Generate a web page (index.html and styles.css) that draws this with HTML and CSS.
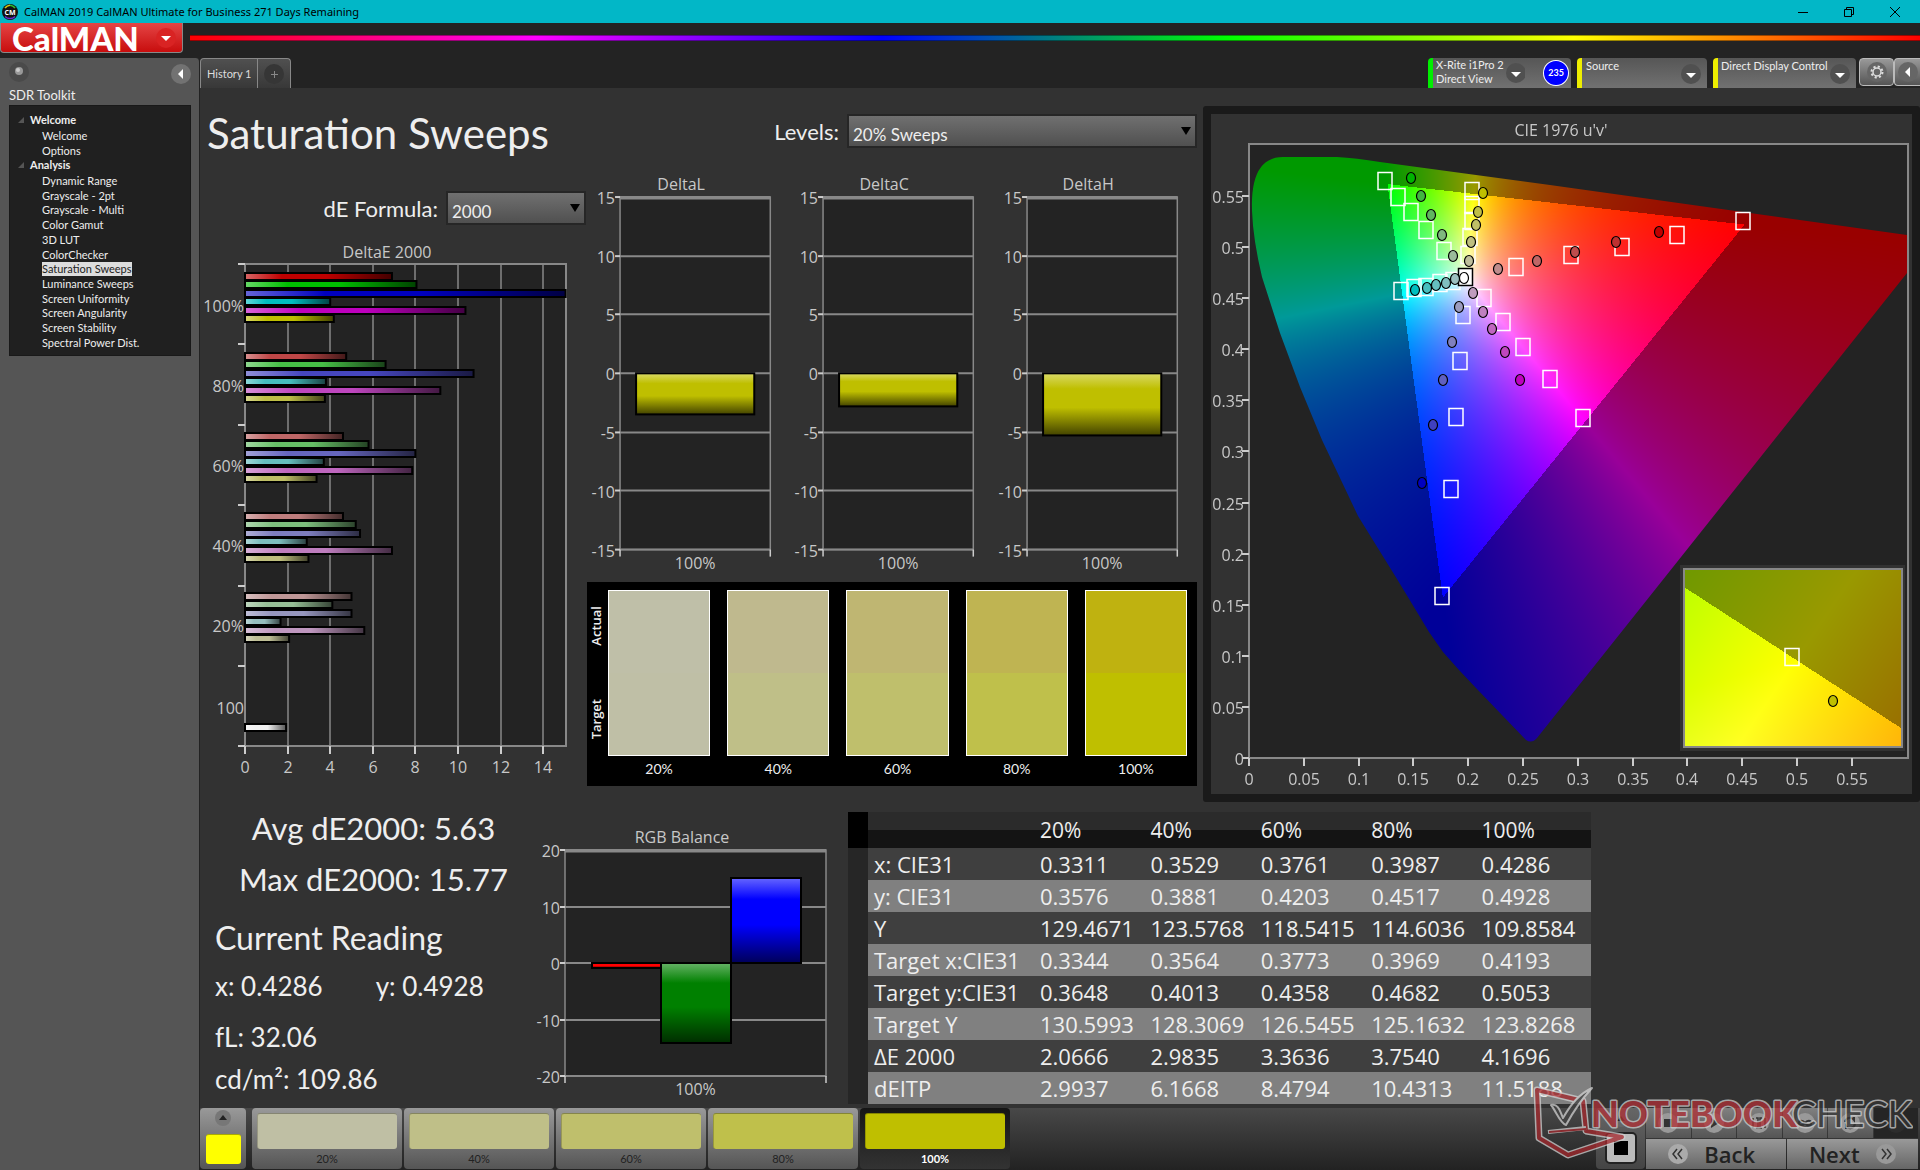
FILE: index.html
```html
<!DOCTYPE html>
<html lang="en">
<head>
    <meta charset="UTF-8">
    <meta name="viewport" content="width=device-width, initial-scale=1.0">
    <title>CalMAN 2019 CalMAN Ultimate for Business</title>
    <link rel="stylesheet" href="styles.css">
</head>
<body>
    <!-- Window title bar -->
    <div class="titlebar">
        <svg class="app-icon" width="16" height="16" viewBox="0 0 16 16">
            <circle cx="8" cy="8" r="8" fill="#111"/>
            <path d="M3 4A6.500 6.500 0 0 1 8 1.200" stroke="#d2c814" stroke-width="1.500" fill="none"/>
            <path d="M8 1.200A6.500 6.500 0 0 1 13 4" stroke="#2fc22f" stroke-width="1.500" fill="none"/>
            <path d="M3 12.500A7 7 0 0 0 13 12.500" stroke="#6b2bd0" stroke-width="1.500" fill="none"/>
            <text x="8" y="11" text-anchor="middle" class="app-icon-text">CM</text>
        </svg>
        <span class="window-title">CalMAN 2019 CalMAN Ultimate for Business 271 Days Remaining</span>
        <div class="window-buttons">
            <button aria-label="Minimize"><svg width="12" height="12"><path d="M1 6.500h10" stroke="#000"/></svg></button>
            <button aria-label="Restore"><svg width="12" height="12" fill="none" stroke="#000"><path d="M1.500 3.500h7v7h-7zM3.500 3.500v-2h7v7h-2"/></svg></button>
            <button aria-label="Close"><svg width="12" height="12"><path d="M1 1l10 10M11 1L1 11" stroke="#000"/></svg></button>
        </div>
    </div>

    <!-- Brand and spectrum line -->
    <div class="brandbar">
        <button class="brand">
            <span>CalMAN</span>
            <svg width="20" height="20"><circle cx="10" cy="10" r="10" fill="#d92323"/><path d="M5 8h10l-5 5z" fill="#fff"/></svg>
        </button>
        <div class="spectrum"></div>
    </div>

    <div class="layout">
        <!-- Sidebar -->
        <aside class="sidebar">
            <div class="sidebar-top">
                <svg width="20" height="20"><circle cx="10" cy="10" r="10" fill="#4a4a4a"/><circle cx="10" cy="9" r="4" fill="#999"/><circle cx="9" cy="8" r="2" fill="#ccc"/></svg>
                <button aria-label="Collapse sidebar"><svg width="20" height="20"><circle cx="10" cy="10" r="10" fill="#727272"/><path d="M12 5v10l-5-5z" fill="#fff"/></svg></button>
            </div>
            <h2>SDR Toolkit</h2>
            <nav class="tree">
                <h3><svg width="6" height="6"><path d="M6 0v6H0z" fill="#555"/></svg>Welcome</h3>
                <ul class="tree-short">
                    <li><a href="#">Welcome</a></li>
                    <li><a href="#">Options</a></li>
                </ul>
                <h3><svg width="6" height="6"><path d="M6 0v6H0z" fill="#555"/></svg>Analysis</h3>
                <ul class="tree-long">
                    <li><a href="#">Dynamic Range</a></li>
                    <li><a href="#">Grayscale - 2pt</a></li>
                    <li><a href="#">Grayscale - Multi</a></li>
                    <li><a href="#">Color Gamut</a></li>
                    <li><a href="#">3D LUT</a></li>
                    <li><a href="#">ColorChecker</a></li>
                    <li><a href="#" class="selected">Saturation Sweeps</a></li>
                    <li><a href="#">Luminance Sweeps</a></li>
                    <li><a href="#">Screen Uniformity</a></li>
                    <li><a href="#">Screen Angularity</a></li>
                    <li><a href="#">Screen Stability</a></li>
                    <li><a href="#">Spectral Power Dist.</a></li>
                </ul>
            </nav>
        </aside>

        <main class="main-content">
            <!-- Tabs and devices -->
            <div class="tabbar">
                <div class="tabs">
                    <button class="tab">History 1</button>
                    <button class="tab add" aria-label="Add tab"><svg width="20" height="20"><circle cx="10" cy="10" r="10" fill="#363636"/><path d="M7 10.500h7M10.500 7v7" stroke="#888"/></svg></button>
                </div>
                <div class="devices">
                    <button class="device meter">
                        <span>X-Rite i1Pro 2<br>Direct View</span>
                        <svg width="20" height="20"><circle cx="10" cy="10" r="10" fill="#505050"/><path d="M5 9h10l-5 5z" fill="#fff"/></svg>
                        <b>235</b>
                    </button>
                    <button class="device source">
                        <span>Source</span>
                        <svg width="20" height="20"><circle cx="10" cy="10" r="10" fill="#505050"/><path d="M5 9h10l-5 5z" fill="#fff"/></svg>
                    </button>
                    <button class="device display">
                        <span>Direct Display Control</span>
                        <svg width="20" height="20"><circle cx="10" cy="10" r="10" fill="#505050"/><path d="M5 9h10l-5 5z" fill="#fff"/></svg>
                    </button>
                    <button class="square" aria-label="Settings">
                        <svg width="20" height="20"><circle cx="10" cy="10" r="10" fill="#666"/><circle cx="10" cy="10" r="4" fill="none" stroke="#ddd" stroke-width="1.500"/><circle cx="10" cy="10" r="5.500" fill="none" stroke="#ddd" stroke-width="2" stroke-dasharray="2.160"/></svg>
                    </button>
                    <button class="square last" aria-label="Collapse"><svg width="20" height="20"><circle cx="10" cy="10" r="10" fill="#666"/><path d="M12 5v10l-5-5z" fill="#fff"/></svg></button>
                </div>
            </div>

            <div class="workspace">
                <div class="upper">
                    <section class="sweeps">
                        <h1>Saturation Sweeps</h1>
                        <div class="field formula">
                            <label for="formula">dE Formula:</label>
                            <div class="select"><select id="formula"><option>2000</option></select></div>
                        </div>
                        <svg id="delta-e" class="chart" viewBox="0 0 386 545"></svg>
                    </section>

                    <section class="deltas">
                        <div class="field levels">
                            <label for="levels">Levels:</label>
                            <div class="select"><select id="levels"><option>20% Sweeps</option></select></div>
                        </div>
                        <div class="delta-charts">
                            <svg id="delta-l" class="chart" viewBox="0 0 203 408"></svg>
                            <svg id="delta-c" class="chart" viewBox="0 0 203 408"></svg>
                            <svg id="delta-h" class="chart" viewBox="0 0 203 408"></svg>
                        </div>
                        <div class="compare">
                            <div class="compare-side"><span>Actual</span><span>Target</span></div>
                            <figure><div class="swatch s20"></div><figcaption>20%</figcaption></figure>
                            <figure><div class="swatch s40"></div><figcaption>40%</figcaption></figure>
                            <figure><div class="swatch s60"></div><figcaption>60%</figcaption></figure>
                            <figure><div class="swatch s80"></div><figcaption>80%</figcaption></figure>
                            <figure><div class="swatch s100"></div><figcaption>100%</figcaption></figure>
                        </div>
                    </section>

                    <section class="cie">
                        <canvas id="gamut" width="701" height="680"></canvas>
                        <svg id="cie-chart" class="chart" viewBox="0 0 701 680"></svg>
                    </section>
                </div>

                <div class="lower">
                    <section class="stats">
                        <div class="summary">
                            <p>Avg dE2000: 5.63</p>
                            <p>Max dE2000: 15.77</p>
                        </div>
                        <h2>Current Reading</h2>
                        <p class="reading xy"><span>x: 0.4286</span><span>y: 0.4928</span></p>
                        <p class="reading">fL: 32.06</p>
                        <p class="reading">cd/m²: 109.86</p>
                    </section>
                    <svg id="rgb" class="chart" viewBox="0 0 310 284"></svg>
                    <table class="results">
                        <thead>
                            <tr><th></th><th></th><th>20%</th><th>40%</th><th>60%</th><th>80%</th><th>100%</th></tr>
                        </thead>
                        <tbody>
                            <tr><td></td><th>x: CIE31</th><td>0.3311</td><td>0.3529</td><td>0.3761</td><td>0.3987</td><td>0.4286</td></tr>
                            <tr><td></td><th>y: CIE31</th><td>0.3576</td><td>0.3881</td><td>0.4203</td><td>0.4517</td><td>0.4928</td></tr>
                            <tr><td></td><th>Y</th><td>129.4671</td><td>123.5768</td><td>118.5415</td><td>114.6036</td><td>109.8584</td></tr>
                            <tr><td></td><th>Target x:CIE31</th><td>0.3344</td><td>0.3564</td><td>0.3773</td><td>0.3969</td><td>0.4193</td></tr>
                            <tr><td></td><th>Target y:CIE31</th><td>0.3648</td><td>0.4013</td><td>0.4358</td><td>0.4682</td><td>0.5053</td></tr>
                            <tr><td></td><th>Target Y</th><td>130.5993</td><td>128.3069</td><td>126.5455</td><td>125.1632</td><td>123.8268</td></tr>
                            <tr><td></td><th>ΔE 2000</th><td>2.0666</td><td>2.9835</td><td>3.3636</td><td>3.7540</td><td>4.1696</td></tr>
                            <tr><td></td><th>dEITP</th><td>2.9937</td><td>6.1668</td><td>8.4794</td><td>10.4313</td><td>11.5188</td></tr>
                        </tbody>
                    </table>
                </div>
            </div>

            <!-- Bottom bar -->
            <footer class="bottombar">
                <button class="current" aria-label="Current color">
                    <svg width="16" height="16"><circle cx="8" cy="8" r="8" fill="#777"/><path d="M4 10h8L8 5z" fill="#222"/></svg>
                    <i></i>
                </button>
                <button class="level l20"><i></i>20%</button>
                <button class="level l40"><i></i>40%</button>
                <button class="level l60"><i></i>60%</button>
                <button class="level l80"><i></i>80%</button>
                <button class="level l100 active"><i></i>100%</button>
                <div class="transport">
                    <div class="stop">
                        <button aria-label="Expand"><svg width="16" height="16"><circle cx="8" cy="8" r="8" fill="#666"/><path d="M4 10h8L8 5z" fill="#222"/></svg></button>
                        <button class="stop-big" aria-label="Pattern"><svg width="32" height="32"><rect x="1" y="1" width="30" height="30" rx="4" fill="#bbb" stroke="#222" stroke-width="2"/><path d="M9 9h14v14H9z" fill="#000"/></svg></button>
                    </div>
                    <div class="controls">
                        <div class="play-row">
                            <button aria-label="Stop"><svg width="20" height="20"><circle cx="10" cy="10" r="10" fill="#999"/><path d="M6 6h8v8H6z" fill="#333"/></svg></button>
                            <button aria-label="Play"><svg width="20" height="20"><circle cx="10" cy="10" r="10" fill="#999"/><path d="M7 5l8 5-8 5z" fill="#333"/></svg></button>
                            <button aria-label="Step"><svg width="20" height="20"><circle cx="10" cy="10" r="10" fill="#999"/><path d="M4 5v10M16 5v10M7 5h2v10H7M13 5h-2v10h2" fill="none" stroke="#333" stroke-width="1.500"/></svg></button>
                            <button aria-label="Loop"><svg width="20" height="20"><circle cx="10" cy="10" r="10" fill="#999"/><path d="M10 10c-2-3-6-3-6 0s4 3 6 0 6-3 6 0-4 3-6 0z" fill="none" stroke="#333" stroke-width="2"/></svg></button>
                            <button aria-label="Refresh"><svg width="20" height="20"><circle cx="10" cy="10" r="10" fill="#999"/><path d="M5 9a5 5 0 0 1 9-2V4M15 11a5 5 0 0 1-9 2v3" fill="none" stroke="#333" stroke-width="2"/></svg></button>
                            <button class="off" aria-label="Record"><svg width="20" height="20"><circle cx="10" cy="10" r="10" fill="#2c2c2c"/></svg></button>
                        </div>
                        <div class="nav-row">
                            <button><svg width="20" height="20"><circle cx="10" cy="10" r="10" fill="#aaa"/><path d="M9 5l-4 5 4 5M14 5l-4 5 4 5" fill="none" stroke="#333" stroke-width="1.500"/></svg>Back</button>
                            <button>Next<svg width="20" height="20"><circle cx="10" cy="10" r="10" fill="#999"/><path d="M6 5l4 5-4 5M11 5l4 5-4 5" fill="none" stroke="#333" stroke-width="1.500"/></svg></button>
                        </div>
                    </div>
                </div>
                <svg class="watermark" width="380" height="76" viewBox="0 0 380 76">
                    <g stroke-linejoin="round">
                        <path d="M4 6L50 17 53 47 89 53 35 71 6 54z" fill="none" stroke="#d0d0d0" stroke-width="7"/>
                        <path d="M4 6L50 17 53 47 89 53 35 71 6 54z" fill="none" stroke="#a5282d" stroke-width="4"/>
                        <path d="M18 21c7-2 9 6 12 13C38 20 46 10 59 4 48 16 40 28 33 41 27 39 23 27 18 21z" fill="#444" stroke="#d0d0d0" stroke-width="2"/>
                        <path d="M15 48l38-4" stroke="#d0d0d0" stroke-width="4"/>
                        <path d="M16 48l37-3" stroke="#a5282d" stroke-width="2"/>
                    </g>
                    <text x="58" y="43" class="mark-red">NOTEBOOK</text>
                    <text x="259" y="43" class="mark-grey">CHECK</text>
                </svg>
            </footer>
        </main>
    </div>

    <script src="charts.js"></script>
</body>
</html>
```
FILE: styles.css
```css
* {
    margin: 0;
    padding: 0;
    box-sizing: border-box;
}

body {
    font-family: Lato, 'Open Sans', sans-serif;
    background: #232323;
    color: #eee;
    display: flex;
    flex-direction: column;
    min-height: 100vh;
}

button {
    border: none;
    background: none;
    font-family: inherit;
    color: inherit;
}

svg, canvas {
    display: block;
}

/* Title bar */
.titlebar {
    height: 23px;
    background: #02b7c7;
    display: flex;
    align-items: center;
    gap: 6px;
    padding-left: 2px;
}

.app-icon-text {
    font: bold 7px 'Open Sans', sans-serif;
    fill: #fff;
}

.window-title {
    font: 11px 'Noto Sans', sans-serif;
    color: #000;
    flex: 1;
}

.window-buttons {
    display: flex;
    padding-right: 2px;
}

.window-buttons button {
    width: 46px;
    display: flex;
    justify-content: center;
}

/* Brand */
.brandbar {
    height: 35px;
    display: flex;
    gap: 7px;
}

.brand {
    width: 183px;
    height: 30px;
    padding: 0 6px 0 11px;
    display: flex;
    align-items: center;
    justify-content: space-between;
    background: linear-gradient(#e54545, #c80d0d);
    border: 1px solid #888;
    border-top: none;
    border-radius: 0 0 4px 4px;
    color: #fff;
    font: 900 33px Lato, sans-serif;
    line-height: 28px;
}

.spectrum {
    flex: 1;
    height: 6px;
    margin-top: 12px;
    background: linear-gradient(to right, #f00, #f0f, #00f, #0f0, #ff0, #f00);
    border-top: 1px solid rgba(0, 0, 0, 0.4);
    border-bottom: 1px solid rgba(0, 0, 0, 0.4);
}

.layout {
    flex: 1;
    display: flex;
}

/* Sidebar */
.sidebar {
    width: 200px;
    padding: 4px 8px 4px 9px;
    background: #555;
    border-top-right-radius: 4px;
    border-right: 1px solid #222;
}

.sidebar-top {
    display: flex;
    justify-content: space-between;
    height: 24px;
}

.sidebar h2 {
    font-size: 13px;
    font-weight: normal;
    line-height: 19px;
}

.tree {
    height: 251px;
    padding: 7px 0 0 8px;
    background: #202020;
    border: 1px solid #191919;
}

.tree h3 {
    display: flex;
    align-items: center;
    gap: 6px;
    font-size: 11px;
    line-height: 14px;
}

.tree ul {
    list-style: none;
    display: flex;
    flex-direction: column;
    justify-content: space-between;
    padding: 2px 0 0 24px;
}

.tree-short {
    height: 31px;
}

.tree-long {
    height: 178px;
}

.tree li {
    font-size: 11px;
    line-height: 14px;
}

.tree a {
    display: inline-block;
    color: #eee;
    text-decoration: none;
}

.tree a.selected {
    background: #ddd;
    color: #222;
}

/* Tabs */
.main-content {
    flex: 1;
    min-width: 0;
    display: flex;
    flex-direction: column;
}

.tabbar {
    height: 30px;
    display: flex;
    justify-content: space-between;
}

.tabs {
    display: flex;
}

.tab {
    padding: 0 6px;
    background: linear-gradient(#505050, #383838);
    border: 1px solid #888;
    border-bottom: none;
    border-top-left-radius: 4px;
    font-size: 11px;
    color: #ddd;
}

.tab.add {
    border-left: none;
    border-radius: 0 4px 0 0;
}

.devices {
    display: flex;
}

.device {
    display: flex;
    align-items: center;
    gap: 6px;
    width: 130px;
    margin-right: 6px;
    padding: 1px 6px 0 4px;
    background: linear-gradient(#565656, #717171);
    border-left: 5px solid #ee0;
    border-radius: 4px 4px 0 0;
    font-size: 11px;
    line-height: 14px;
    text-align: left;
}

.device span {
    flex: 1;
    align-self: flex-start;
    white-space: nowrap;
}

.device.meter, .device.display {
    width: 143px;
}

.device.meter {
    gap: 2px;
    border-left-color: #0e0;
    padding: 0 2px 0 3px;
}

.device.display {
    margin-right: 3px;
    gap: 2px;
    padding-left: 3px;
}

.device b {
    width: 26px;
    height: 26px;
    margin-left: 16px;
    border: 1px solid #fff;
    border-radius: 50%;
    background: #00f;
    color: #fff;
    font-size: 9px;
    line-height: 24px;
    text-align: center;
}

.square {
    width: 35px;
    height: 28px;
    display: flex;
    align-items: center;
    justify-content: center;
    background: linear-gradient(#999, #555);
    border: 1px solid #bbb;
    border-radius: 4px;
}

.square.last {
    width: 26px;
    border-right: none;
    border-radius: 4px 0 0 4px;
}

/* Workspace */
.workspace {
    flex: 1;
    background: #323232;
}

.upper {
    display: grid;
    grid-template-columns: 386fr 617fr 717fr;
    padding-top: 18px;
}

.chart {
    width: 100%;
    height: auto;
}

.chart text {
    font-family: 'Open Sans', sans-serif;
    font-size: 16px;
    fill: #c8c8c8;
}

h1 {
    padding-left: 7px;
    font-size: 42px;
    font-weight: normal;
    line-height: 54px;
}

.field {
    display: flex;
    align-items: center;
    justify-content: flex-end;
    gap: 8px;
    font-size: 22px;
}

.formula {
    margin-top: 31px;
    height: 34px;
}

.levels {
    margin: 8px 0 22px;
    height: 34px;
}

.select {
    position: relative;
    width: 140px;
    height: 34px;
}

.levels .select {
    width: 350px;
}

.select::after {
    content: '';
    position: absolute;
    right: 6px;
    top: 13px;
    border: 5px solid transparent;
    border-top: 8px solid #000;
    border-bottom: none;
}

select {
    appearance: none;
    width: 100%;
    height: 100%;
    padding: 6px 4px 0;
    border: 2px solid #262626;
    background: linear-gradient(#707070, #505050);
    color: #eee;
    font: 17px Lato, sans-serif;
}

.sweeps .chart {
    margin-top: 15px;
}

.deltas {
    padding: 0 6px 0 1px;
}

.delta-charts {
    display: grid;
    grid-template-columns: repeat(3, 1fr);
}

/* Actual / target swatches */
.compare {
    display: flex;
    gap: 17px;
    margin-top: 3px;
    padding: 8px 10px 4px 0;
    background: #000;
}

.compare-side {
    width: 4px;
    height: 166px;
    padding: 16px 0;
    display: flex;
    flex-direction: column;
    justify-content: space-between;
    font: 600 13px 'Open Sans', sans-serif;
}

.compare-side span {
    writing-mode: vertical-rl;
    transform: rotate(180deg);
}

.compare figure {
    flex: 1;
}

.swatch {
    height: 166px;
    border: 1px solid #fff;
}

.compare figcaption {
    font-size: 14px;
    line-height: 26px;
    text-align: center;
}

.s20 { background: linear-gradient(#bfbfa8 50%, #bfbfa6 50%); }
.s40 { background: linear-gradient(#bfb98e 50%, #bfbf88 50%); }
.s60 { background: linear-gradient(#bfb672 50%, #bfbf6c 50%); }
.s80 { background: linear-gradient(#bfb452 50%, #bfc04b 50%); }
.s100 { background: linear-gradient(#bfb210 50%, #bfbf00 50%); }

/* CIE panel */
.cie {
    display: grid;
    border: 8px solid #1a1a1a;
    border-radius: 3px;
    align-self: start;
}

.cie canvas, .cie svg {
    grid-area: 1 / 1;
    width: 100%;
    height: auto;
}

/* Lower part */
.lower {
    display: grid;
    grid-template-columns: 332fr 310fr 6fr 743fr 329fr;
    align-items: start;
}

.stats {
    padding-left: 15px;
    white-space: nowrap;
}

.summary {
    padding-top: 1px;
    text-align: center;
    font-size: 31px;
    line-height: 51px;
}

.stats h2 {
    margin-top: 10px;
    font-size: 32px;
    font-weight: normal;
    line-height: 46px;
}

.reading {
    font-size: 26px;
    line-height: 42px;
}

.reading.xy {
    display: flex;
    gap: 53px;
    margin: 3px 0 8px;
    line-height: 44px;
}

#rgb {
    margin-top: 20px;
}

.results {
    grid-column: 4;
    border-collapse: collapse;
    table-layout: fixed;
    width: 100%;
    font: 22px 'Open Sans', sans-serif;
    margin-top: 10px;
}

.results th, .results td {
    height: 32px;
    padding-left: 6px;
    line-height: 30px;
    font-weight: normal;
    text-align: left;
    white-space: nowrap;
}

.results td, .results thead th {
    padding-left: 1px;
}

.results thead tr {
    background: linear-gradient(#2b2b2b 50%, #141414 50%);
}

.results thead th {
    height: 36px;
    font-size: 21px;
    font-weight: 500;
    width: 15%;
}

.results thead th:first-child {
    width: 20px;
    background: #000;
}

.results thead th:nth-child(2) {
    width: 171px;
}

.results tbody tr {
    background: #3f3f3f;
}

.results tbody tr:nth-child(even) {
    background: #808080;
}

.results tbody td:first-child {
    background: #262626;
}

/* Bottom bar */
.bottombar {
    position: relative;
    height: 62px;
    display: flex;
    gap: 2px;
    background: linear-gradient(#484848, #222);
}

.current {
    width: 46px;
    height: 61px;
    margin-right: 4px;
    display: flex;
    flex-direction: column;
    align-items: center;
    justify-content: space-between;
    padding: 2px 0 5px;
    background: linear-gradient(#999, #555);
    border-radius: 4px;
}

.current i {
    width: 35px;
    height: 30px;
    background: #ff0;
    border-top: 1px solid #aa0;
    border-radius: 3px;
}

.level {
    width: 150px;
    height: 61px;
    padding: 5px;
    background: linear-gradient(#999, #555);
    border-radius: 4px;
    font-size: 11px;
    line-height: 20px;
    color: #222;
}

.level i {
    display: block;
    height: 36px;
    border-radius: 3px;
    border-top: 1px solid rgba(0, 0, 0, 0.3);
    border-left: 1px solid rgba(0, 0, 0, 0.2);
}

.level.active {
    background: linear-gradient(#151515, #333);
    color: #fff;
    font-weight: bold;
}

.l20 i { background: #bfbfa4; }
.l40 i { background: #bfbf88; }
.l60 i { background: #bfbf6c; }
.l80 i { background: #bfc04b; }
.l100 i { background: #bfbf00; }

.transport {
    display: flex;
    gap: 1px;
    margin-left: auto;
    padding-right: 2px;
}

.transport button {
    display: flex;
    align-items: center;
    justify-content: center;
}

.stop {
    width: 49px;
    height: 61px;
    display: flex;
    flex-direction: column;
    align-items: center;
    gap: 5px;
    padding-top: 3px;
    background: linear-gradient(#666, #444);
    border-radius: 4px;
}

.controls {
    display: flex;
    flex-direction: column;
    gap: 1px;
    width: 272px;
}

.play-row, .nav-row {
    display: flex;
    gap: 1px;
}

.play-row button {
    flex: 1;
    height: 30px;
    background: linear-gradient(#808080, #555);
}

.play-row button.off {
    background: #252525;
}

.nav-row button {
    flex: 1;
    height: 30px;
    gap: 16px;
    background: linear-gradient(#999, #666);
    color: #222;
    font: 600 22px 'Open Sans', sans-serif;
}

.nav-row button:first-child {
    padding-right: 8px;
}

.watermark {
    position: absolute;
    right: 7px;
    bottom: 10px;
    opacity: 0.75;
}

.watermark text {
    font: 900 36px Lato, sans-serif;
    stroke: #ccc;
    stroke-width: 3px;
    paint-order: stroke;
    stroke-linejoin: round;
}

.mark-red {
    fill: #b03036;
}

.watermark .mark-grey {
    font-weight: 400;
    fill: #333;
}
```
FILE: charts.js
```js
const NS = 'http://www.w3.org/2000/svg';

function add(parent, name, attrs, text) {
    const el = document.createElementNS(NS, name);
    for (const key in attrs) el.setAttribute(key, attrs[key]);
    if (text !== undefined) el.textContent = text;
    parent.appendChild(el);
    return el;
}

function label(svg, x, y, text, anchor) {
    add(svg, 'text', { x: x, y: y, 'text-anchor': anchor || 'middle' }, text);
}

function line(svg, x1, y1, x2, y2, color, width) {
    add(svg, 'path', { d: `M${x1} ${y1}L${x2} ${y2}`, stroke: color, 'stroke-width': width || 1 });
}

// Glossy gradient: light at the start, dark at the end
let gradientCount = 0;
function gloss(svg, rgb, vertical) {
    const id = svg.id + '-g' + gradientCount++;
    const g = add(svg, 'linearGradient', { id: id, x1: 0, y1: 0, x2: vertical ? 0 : 1, y2: vertical ? 1 : 0 });
    const mix = (to, k) => 'rgb(' + rgb.map(c => Math.round(c + (to - c) * k)).join(',') + ')';
    add(g, 'stop', { offset: 0, 'stop-color': mix(255, 0.4) });
    add(g, 'stop', { offset: 0.25, 'stop-color': mix(255, 0) });
    add(g, 'stop', { offset: 0.55, 'stop-color': mix(0, 0) });
    add(g, 'stop', { offset: 1, 'stop-color': mix(0, 0.65) });
    return `url(#${id})`;
}

// DeltaE 2000, horizontal bars
function drawDeltaE() {
    const svg = document.getElementById('delta-e');
    const groups = [
        ['100%', 0, [6.9, 8.05, 15.05, 4, 10.35, 4.17]],
        ['80%', 70, [4.75, 6.6, 10.73, 3.8, 9.17, 3.75]],
        ['60%', 102, [4.6, 5.8, 8, 3.7, 7.85, 3.36]],
        ['40%', 125, [4.6, 5.2, 5.4, 2.9, 6.9, 2.98]],
        ['20%', 150, [5, 4.1, 5, 1.67, 5.6, 2.07]]
    ];
    const hues = [[1, 0, 0], [0, 1, 0], [0, 0, 1], [0, 1, 1], [1, 0, 1], [1, 1, 0]];
    const left = 45, top = 24, right = 366, bottom = 506, unit = 21.3;

    label(svg, 187, 18, 'DeltaE 2000');
    add(svg, 'rect', { x: left, y: top, width: right - left, height: bottom - top, fill: '#232323', stroke: '#888', 'stroke-width': 2 });
    for (let v = 0; v <= 14; v += 2) {
        const x = Math.round(left + v * unit);
        line(svg, x, top, x, bottom, '#888', 1.5);
        line(svg, x, bottom, x, bottom + 8, '#ccc', 2);
        label(svg, x, 533, v);
    }
    for (let i = 0; i <= 6; i++) {
        const y = Math.round(top + i * 80.4);
        line(svg, left - 7, y, left, y, '#ccc', 2);
    }
    groups.forEach(([name, base, values], i) => {
        values.forEach((value, j) => {
            const rgb = hues[j].map(c => c ? 190 : base);
            add(svg, 'rect', {
                x: left, y: Math.round(top + 9 + i * 80 + j * 8.4), width: value * unit, height: 7,
                fill: gloss(svg, rgb), stroke: '#000', 'stroke-width': 2
            });
        });
        label(svg, left - 1, 72 + i * 80, name, 'end');
    });
    add(svg, 'rect', { x: left, y: 484, width: 1.93 * unit, height: 7, fill: gloss(svg, [240, 240, 240]), stroke: '#000', 'stroke-width': 2 });
    label(svg, left - 1, 474, '100', 'end');
}

// Vertical charts around a zero line
function drawColumns(id, title, box, limit, step, bars) {
    const svg = document.getElementById(id);
    const y = v => Math.round(box.top + (limit - v) * (box.bottom - box.top) / (2 * limit));
    label(svg, box.titleX, box.top - 7, title);
    add(svg, 'rect', { x: box.left, y: box.top, width: box.right - box.left, height: box.bottom - box.top, fill: '#232323', stroke: '#888', 'stroke-width': 1.5 });
    line(svg, box.left, box.top + 1, box.right, box.top + 1, '#888', 3);
    for (let v = limit; v >= -limit; v -= step) {
        line(svg, box.left, y(v), box.right, y(v), '#888', 2);
        line(svg, box.left - 5, y(v), box.left, y(v), '#ccc', 2);
        label(svg, box.left - 5, y(v) + 7, v, 'end');
    }
    line(svg, box.left, box.bottom, box.left, box.bottom + 7, '#ccc', 1.5);
    line(svg, box.right, box.bottom, box.right, box.bottom + 7, '#ccc', 1.5);
    label(svg, (box.left + box.right) / 2, box.bottom + 19, '100%');
    for (const [x, width, value, rgb] of bars) {
        add(svg, 'rect', {
            x: x, y: y(Math.max(value, 0)), width: width, height: Math.abs(y(value) - y(0)),
            fill: gloss(svg, rgb, true), stroke: '#000', 'stroke-width': 2
        });
    }
}

// CIE 1976 u'v'
function toRgb(u, v) {
    const X = 9 * u / (4 * v), Z = (12 - 3 * u - 20 * v) / (4 * v);
    const rgb = [
        3.2406 * X - 1.5372 - 0.4986 * Z,
        -0.9689 * X + 1.8758 + 0.0415 * Z,
        0.0557 * X - 0.204 + 1.057 * Z
    ];
    const scale = Math.min(...rgb) < 0 ? 153 : 255;
    const max = Math.max(...rgb);
    return rgb.map(c => Math.max(c, 0) / max * scale);
}

function paint(ctx, x0, y0, width, height, colorAt) {
    const off = document.createElement('canvas');
    off.width = width;
    off.height = height;
    const offCtx = off.getContext('2d');
    const image = offCtx.createImageData(width, height);
    for (let y = 0; y < height; y++) {
        for (let x = 0; x < width; x++) {
            const rgb = colorAt(x0 + x, y0 + y);
            image.data.set([rgb[0], rgb[1], rgb[2], 255], (y * width + x) * 4);
        }
    }
    offCtx.putImageData(image, 0, 0);
    ctx.drawImage(off, x0, y0);
}

// Colors around the yellow target, dimmed above the gamut edge
function insetColor(x, y) {
    const t = x - 586 + 0.68 * (y - 543);
    const inside = y - 543 > 0.65 * (x - 581);
    const scale = inside ? 1 : 0.6;
    return [
        Math.min(255, 255 + t * 0.4) * scale,
        Math.min(255, 255 - t * 0.45) * scale,
        inside ? Math.max(0, (y - 543) * 0.4 - Math.abs(t) * 0.15) : 0
    ];
}

function drawCie() {
    const ctx = document.getElementById('gamut').getContext('2d');
    const svg = document.getElementById('cie-chart');
    const left = 38, top = 30, right = 697, bottom = 644;

    ctx.fillStyle = '#323232';
    ctx.fillRect(0, 0, 701, 680);
    ctx.fillStyle = '#232323';
    ctx.fillRect(left, top, right - left, bottom - top);

    ctx.save();
    ctx.clip(new Path2D('M72 43H126Q145 44 169 48L339 71 696 121V159L326 624Q321 630 315 626L265 574 248 556 232 538 218 518 209 503 186 465 147 402 111 326 89 273 69 219 51 163Q42 125 41 97Q39 43 72 43Z'));
    paint(ctx, left, top, right - left, bottom - top, (x, y) => toRgb((x - left - 1) / 1096, (bottom + 0.5 - y) / 1022));
    ctx.restore();

    // zoomed inset
    ctx.fillStyle = '#323232';
    ctx.fillRect(469, 451, 225, 186);
    paint(ctx, 473, 455, 218, 178, insetColor);
    add(svg, 'rect', { x: 473, y: 455, width: 218, height: 178, fill: 'none', stroke: '#888', 'stroke-width': 2 });

    label(svg, 350, 22, "CIE 1976 u'v'");
    add(svg, 'rect', { x: left, y: top, width: right - left, height: bottom - top, fill: 'none', stroke: '#888', 'stroke-width': 2 });
    for (let i = 0; i <= 11; i++) {
        const value = String(i * 5 / 100);
        const x = Math.round(left + i * 54.8), y = Math.round(bottom - i * 51.1);
        line(svg, x, bottom, x, bottom + 8, '#ccc', 2);
        label(svg, x, 671, value);
        line(svg, left - 7, y, left, y, '#ccc', 2);
        label(svg, left - 5, y + 7, value, 'end');
    }

    const targets = [
        [174, 67], [187, 83], [200, 98], [215, 116], [233, 137],
        [261, 77], [261, 91], [261, 107], [259, 123], [257, 141],
        [190, 177], [203, 174], [215, 173], [229, 169], [242, 167],
        [305, 153], [360, 141], [411, 133], [466, 121], [532, 107],
        [273, 184], [292, 208], [312, 233], [339, 265], [372, 304],
        [252, 201], [249, 247], [245, 303], [240, 375], [231, 482],
        [581, 543]
    ];
    for (const [x, y] of targets) {
        add(svg, 'rect', { x: x - 7, y: y - 8.5, width: 14, height: 17, fill: 'none', stroke: '#fff', 'stroke-width': 1.5 });
    }
    add(svg, 'rect', { x: 247.5, y: 154.5, width: 14, height: 17, fill: '#fff', stroke: '#000', 'stroke-width': 1.5 });

    const actual = {
        '#00b400 #40b540 #60b560 #7fb87f #9abb9a': [[200, 64], [210, 82], [220, 101], [231, 121], [242, 142]],
        '#bfbf00 #bfbf46 #bfbf66 #bfbf80 #bfbf9c': [[272, 79], [267, 98], [265, 111], [260, 128], [258, 147]],
        '#00bfbf #46bfbf #66bfbf #80bfbf #9cbfbf': [[204, 176], [216, 174], [225, 171], [235, 169], [244, 165]],
        '#bf9cbf #bf80bf #bf66bf #bf46bf #bf00bf': [[262, 179], [272, 198], [281, 215], [294, 238], [309, 266]],
        '#9c9cbf #8080bf #6060bf #4040bf #0000bf': [[248, 193], [241, 228], [232, 266], [222, 311], [211, 369]],
        '#bf8c8c #bf6666 #bf4c4c #bf3030 #bf0000': [[287, 155], [326, 147], [364, 138], [405, 128], [448, 118]],
        '#ffffff #bfbf00': [[253, 164], [622, 587]]
    };
    for (const colors in actual) {
        actual[colors].forEach(([x, y], i) => {
            add(svg, 'ellipse', { cx: x, cy: y, rx: 4.5, ry: 5.5, fill: colors.split(' ')[i], stroke: '#000', 'stroke-width': 1.2 });
        });
    }
}

const deltaBox = { left: 33, right: 183, top: 27, bottom: 379, titleX: 94 };
const yellow = [191, 191, 0];
drawDeltaE();
drawColumns('delta-l', 'DeltaL', deltaBox, 15, 5, [[49, 118, -3.5, yellow]]);
drawColumns('delta-c', 'DeltaC', deltaBox, 15, 5, [[49, 118, -2.8, yellow]]);
drawColumns('delta-h', 'DeltaH', deltaBox, 15, 5, [[49, 118, -5.3, yellow]]);
drawColumns('rgb', 'RGB Balance', { left: 33, right: 294, top: 28, bottom: 254, titleX: 150 }, 20, 10, [
    [60, 69, -0.9, [255, 0, 0]],
    [129, 70, -14.2, [0, 128, 0]],
    [199, 70, 15, [0, 0, 255]]
]);
drawCie();
```
